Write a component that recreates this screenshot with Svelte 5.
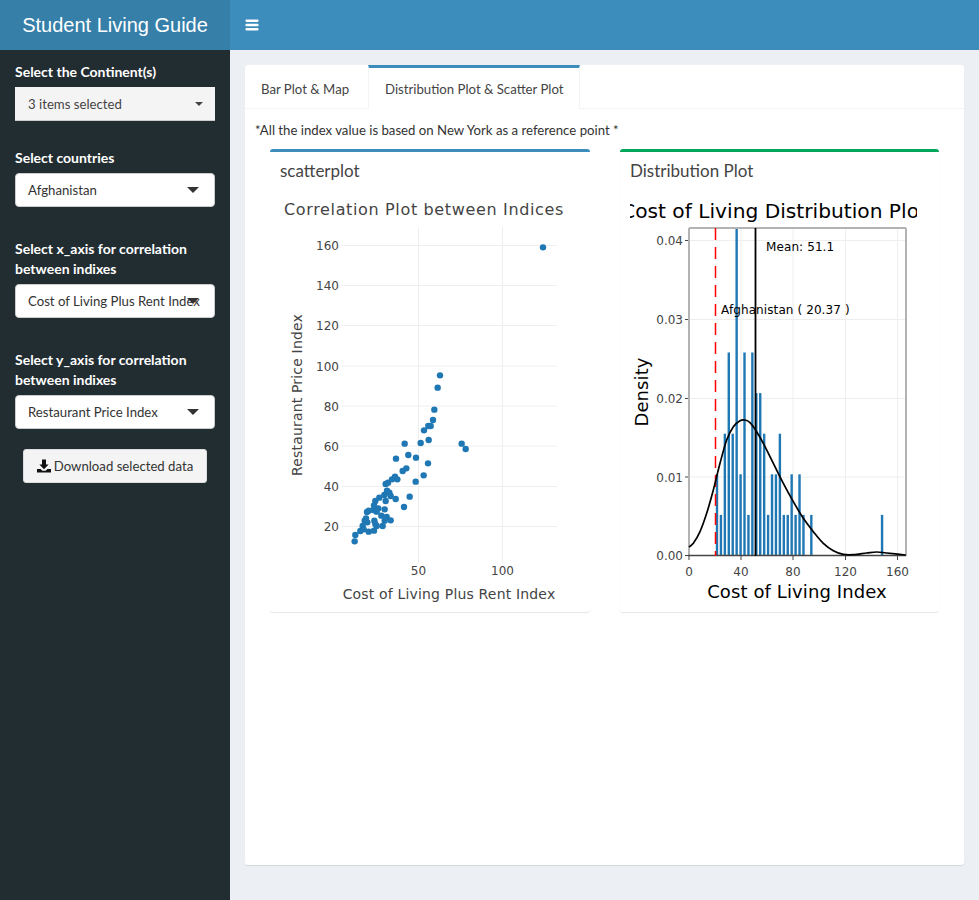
<script>
  // scatter points, read off the reference in page pixels
  const raw = [
    [254,424],[256,405],[271,393],[278,378],[281,388],[284,362],[288,355],[292,367],[296,395],[291,336],
    [296,332],[310,330],[312,316],[316,303],[320,335],[325,325],[328,293],[313,362],[316,372],[320,378],
    [312,392],[338,378],[344,362],[350,351],[362,361],[334,347],[344,328],[347,303],[343,285],[351,272],
    [358,278],[362,288],[377,297],[347,252],[354,248],[366,238],[375,230],[382,238],[398,213],[409,205],
    [437,245],[461,226],[474,190],[419,290],[402,321],[378,176],[415,165],[438,173],[404,131],[452,129],
    [476,120],[462,91],[475,78],[482,78],[489,60],[493,29],[575,131],[587,147],[510,-74],[503,-37],[819,-458]
  ];
  const points = raw.map(([x, y]) => [270 + x / 3, 400 + y / 3]);

  const scatterY = [[160, 245.5], [140, 285.5], [120, 325.5], [100, 366], [80, 406], [60, 446], [40, 486.5], [20, 526.5]];
  const scatterX = [[50, 418.5], [100, 502.5]];

  // histogram: counts per bin, one count is about 40.6px tall
  const counts = [2,1,3,5,3,9,2,5,1,5,4,4,3,1,2,2,3,1,1,2,1,2,1,0,1];
  const bars = counts.map((c, i) => ({ x: 715.8 + i * 3.93, c })).filter((b) => b.c > 0);
  bars.push({ x: 715.8 + 42 * 3.93, c: 1 });

  const densityRaw = [
    [207,441],[220,430],[240,395],[260,340],[280,270],[300,190],[320,120],[340,80],[360,62],[375,60],[390,68],
    [410,95],[430,130],[460,190],[490,250],[520,305],[550,355],[580,395],[610,430],[640,452],[670,463],
    [700,464],[740,459],[770,456],[800,459],[857,465]
  ];
  const density = densityRaw.map(([x, y]) => [620 + x / 3, 400 + y / 3]);

  function smooth(p) {
    let d = `M${p[0][0]} ${p[0][1]}`;
    for (let i = 0; i < p.length - 1; i++) {
      const a = p[i - 1] || p[i];
      const b = p[i];
      const c = p[i + 1];
      const e = p[i + 2] || c;
      d += ` C${b[0] + (c[0] - a[0]) / 6} ${b[1] + (c[1] - a[1]) / 6} ${c[0] - (e[0] - b[0]) / 6} ${c[1] - (e[1] - b[1]) / 6} ${c[0]} ${c[1]}`;
    }
    return d;
  }

  const distY = [['0.00', 555.5], ['0.01', 477], ['0.02', 398.5], ['0.03', 319.5], ['0.04', 240.5]];
  const distX = [['0', 689], ['40', 741], ['80', 793], ['120', 845.5], ['160', 897.5]];
</script>

<div class="page">
  <header class="topbar">
    <div class="logo">Student Living Guide</div>
    <nav class="nav">
      <svg class="burger" width="14" height="12" viewBox="0 0 14 12">
        <rect x="0.5" y="0.5" width="13" height="2.4" rx="0.8" />
        <rect x="0.5" y="4.8" width="13" height="2.4" rx="0.8" />
        <rect x="0.5" y="9.1" width="13" height="2.4" rx="0.8" />
      </svg>
    </nav>
  </header>

  <div class="main">
    <aside class="sidebar">
      <div class="group first">
        <div class="label">Select the Continent(s)</div>
        <div class="picker">3 items selected<span class="caret small"></span></div>
      </div>
      <div class="group">
        <div class="label">Select countries</div>
        <div class="select">Afghanistan<span class="caret"></span></div>
      </div>
      <div class="group">
        <div class="label">Select x_axis for correlation between indixes</div>
        <div class="select">Cost of Living Plus Rent Index<span class="caret"></span></div>
      </div>
      <div class="group">
        <div class="label">Select y_axis for correlation between indixes</div>
        <div class="select">Restaurant Price Index<span class="caret"></span></div>
      </div>
      <button class="download">
        <svg width="14" height="14" viewBox="0 0 14 14">
          <path d="M5 0.5h4v5h2.6L7 10.2 2.4 5.5H5z" fill="#111" />
          <path d="M0 10h3.6L5.4 11.8h3.2L10.4 10H14v3.6H0z" fill="#111" />
        </svg>
        Download selected data
      </button>
    </aside>

    <main class="content">
      <section class="tabbox">
        <div class="tabs">
          <div class="tab">Bar Plot &amp; Map</div>
          <div class="tab active">Distribution Plot &amp; Scatter Plot</div>
        </div>
        <p class="note">*All the index value is based on New York as a reference point *</p>
        <div class="boxes">
          <div class="box blue">
            <h3>scatterplot</h3>
            <svg class="plot" width="320" height="420" viewBox="270 190 320 420">
              {#each scatterY as [, y]}
                <line class="grid" x1="342" x2="557" y1={y} y2={y} />
              {/each}
              {#each scatterX as [, x]}
                <line class="grid" x1={x} x2={x} y1="227" y2="563" />
              {/each}
              <text class="title" x="424" y="214.500">Correlation Plot between Indices</text>
              {#each scatterY as [label, y]}
                <text class="tick end" x="339" y={y + 4.5}>{label}</text>
              {/each}
              {#each scatterX as [label, x]}
                <text class="tick mid" x={x} y="575">{label}</text>
              {/each}
              <text class="axis mid" x="449" y="598.500">Cost of Living Plus Rent Index</text>
              <text class="axis mid" transform="translate(302 395) rotate(-90)">Restaurant Price Index</text>
              {#each points as [x, y]}
                <circle cx={x} cy={y} r="3.2" fill="#1f77b4" />
              {/each}
            </svg>
          </div>

          <div class="box green">
            <h3>Distribution Plot</h3>
            <svg class="plot" width="320" height="420" viewBox="620 190 320 420">
              {#each distY as [, y]}
                <line class="grid" x1="689" x2="906" y1={y} y2={y} />
                <line class="tickmark" x1="685" x2="689" y1={y} y2={y} />
              {/each}
              {#each distX as [, x]}
                <line class="grid" x1={x} x2={x} y1="228" y2="556" />
                <line class="tickmark" x1={x} x2={x} y1="556" y2="560" />
              {/each}
              <svg x="630" y="195" width="287" height="32" viewBox="630 195 287 32">
                <text class="disttitle mid" x="774" y="218">Cost of Living Distribution Plot</text>
              </svg>
              {#each bars as b}
                <rect x={b.x} y={Math.max(228, 555.5 - b.c * 40.6)} width="2.4" height={555.5 - Math.max(228, 555.5 - b.c * 40.6)} fill="#1f77b4" />
              {/each}
              <line class="frame" x1="689" x2="906" y1="228" y2="228" />
              <line class="frame" x1="689" x2="689" y1="228" y2="556" />
              <line class="frame" x1="906" x2="906" y1="228" y2="556" />
              <line class="baseline" x1="688" x2="906" y1="555.5" y2="555.5" />
              <line class="meanline" x1="755.500" x2="755.500" y1="228" y2="556" />
              <line class="refline" x1="715.500" x2="715.500" y1="228" y2="556" />
              <path class="curve" d={smooth(density)} />
              <text class="note-text" x="766" y="251">Mean: 51.1</text>
              <text class="note-text" x="721" y="314">Afghanistan ( 20.37 )</text>
              {#each distY as [label, y]}
                <text class="tick end" x="683" y={y + 4.5}>{label}</text>
              {/each}
              {#each distX as [label, x]}
                <text class="tick mid" x={x} y="576">{label}</text>
              {/each}
              <text class="distaxis mid" x="797" y="598">Cost of Living Index</text>
              <text class="distaxis mid" transform="translate(648 392) rotate(-90)">Density</text>
            </svg>
          </div>
        </div>
      </section>
    </main>
  </div>
</div>

<style>
  :global(body) {
    margin: 0;
    background: #ecf0f5;
  }

  .page {
    width: 979px;
    height: 900px;
    overflow: hidden;
    font-family: "Lato", "Noto Sans", sans-serif;
    font-size: 13.2px;
    color: #333;
  }

  .topbar {
    display: flex;
    height: 50px;
  }

  .logo {
    width: 230px;
    background: #367fa9;
    color: #fff;
    font-family: "Liberation Sans", Arial, sans-serif;
    font-size: 20px;
    line-height: 50px;
    text-align: center;
  }

  .nav {
    flex: 1;
    background: #3c8dbc;
    display: flex;
    align-items: center;
    padding-left: 15px;
  }

  .burger {
    fill: #fff;
  }

  .main {
    display: flex;
    height: 850px;
  }

  .sidebar {
    width: 200px;
    padding: 12px 15px 0;
    background: #222d32;
  }

  .group {
    margin-bottom: 32px;
  }

  .group.first {
    margin-bottom: 27px;
  }

  .label {
    color: #fff;
    font-size: 14px;
    font-weight: 700;
    line-height: 20px;
    margin-bottom: 5px;
  }

  .picker,
  .select {
    position: relative;
    box-sizing: border-box;
    height: 34px;
    line-height: 34px;
    padding-left: 13px;
    white-space: nowrap;
    color: #333;
  }

  .picker {
    background: #f4f4f4;
    border-bottom: 1px solid #ccc;
    color: #444;
  }

  .select {
    background: #fff;
    border: 1px solid #ccc;
    border-radius: 4px;
    padding-left: 12px;
    line-height: 32px;
  }

  .caret {
    position: absolute;
    right: 15px;
    top: 13px;
    border-top: 6px solid #333;
    border-left: 6px solid transparent;
    border-right: 6px solid transparent;
  }

  .caret.small {
    right: 12px;
    top: 15px;
    border-top-width: 4px;
    border-left-width: 4px;
    border-right-width: 4px;
    border-top-color: #444;
  }

  .download {
    display: flex;
    align-items: center;
    justify-content: center;
    gap: 3px;
    width: 184px;
    height: 34px;
    margin: -12px 8px 0;
    padding: 0;
    background: #f4f4f4;
    border: 1px solid #ddd;
    border-radius: 3px;
    font: inherit;
    color: #333;
  }

  .content {
    flex: 1;
    padding: 15px;
  }

  .tabbox {
    height: 800px;
    box-sizing: border-box;
    background: #fff;
    border-radius: 3px;
    box-shadow: 0 1px 1px rgba(0, 0, 0, 0.1);
  }

  .tabs {
    display: flex;
    height: 43px;
    border-bottom: 1px solid #f4f4f4;
  }

  .tab {
    box-sizing: border-box;
    height: 44px;
    width: 123px;
    padding: 14px 0 0 16px;
    line-height: 20px;
    color: #444;
  }

  .tab.active {
    width: 212px;
    padding: 11px 0 0 16px;
    background: #fff;
    border-top: 3px solid #3c8dbc;
    border-left: 1px solid #f4f4f4;
    border-right: 1px solid #f4f4f4;
  }

  .note {
    margin: 0;
    padding: 11px 0 0 10px;
    height: 29px;
    line-height: 20px;
  }

  .boxes {
    display: flex;
    gap: 30px;
    padding: 0 25px;
    margin-top: 0;
  }

  .box {
    box-sizing: border-box;
    width: 320px;
    height: 463px;
    border-top: 3px solid #3c8dbc;
    border-radius: 3px;
    box-shadow: 0 1px 1px rgba(0, 0, 0, 0.1);
  }

  .box.green {
    width: 319px;
    border-top-color: #00a65a;
  }

  .box h3 {
    margin: 0;
    height: 38px;
    padding: 9px 0 0 10px;
    box-sizing: border-box;
    font-size: 17px;
    font-weight: 400;
    line-height: 20px;
    color: #444;
  }

  .plot {
    display: block;
  }

  .plot text {
    font-family: "DejaVu Sans", sans-serif;
  }

  .grid {
    stroke: #eee;
    stroke-width: 1;
  }

  .tickmark {
    stroke: #444;
    stroke-width: 1;
  }

  .frame {
    stroke: #b3b3b3;
    stroke-width: 2;
  }

  .baseline {
    stroke: #444;
    stroke-width: 1.5;
  }

  .meanline {
    stroke: #000;
    stroke-width: 1.8;
  }

  .refline {
    stroke: #f00;
    stroke-width: 1.5;
    stroke-dasharray: 12 7;
  }

  .curve {
    fill: none;
    stroke: #000;
    stroke-width: 1.7;
  }

  .plot .title {
    font-size: 16px;
    letter-spacing: 0.65px;
    fill: #444;
    text-anchor: middle;
  }

  .plot .tick {
    font-size: 12px;
    fill: #444;
  }

  .plot .axis {
    font-size: 14px;
    letter-spacing: 0.17px;
    fill: #444;
  }

  .plot .disttitle {
    font-size: 20.2px;
    fill: #000;
  }

  .plot .distaxis {
    font-size: 18px;
    letter-spacing: 0.1px;
    fill: #000;
  }

  .plot .note-text {
    font-size: 12px;
    letter-spacing: 0.1px;
    fill: #000;
  }

  .end {
    text-anchor: end;
  }

  .mid {
    text-anchor: middle;
  }
</style>
